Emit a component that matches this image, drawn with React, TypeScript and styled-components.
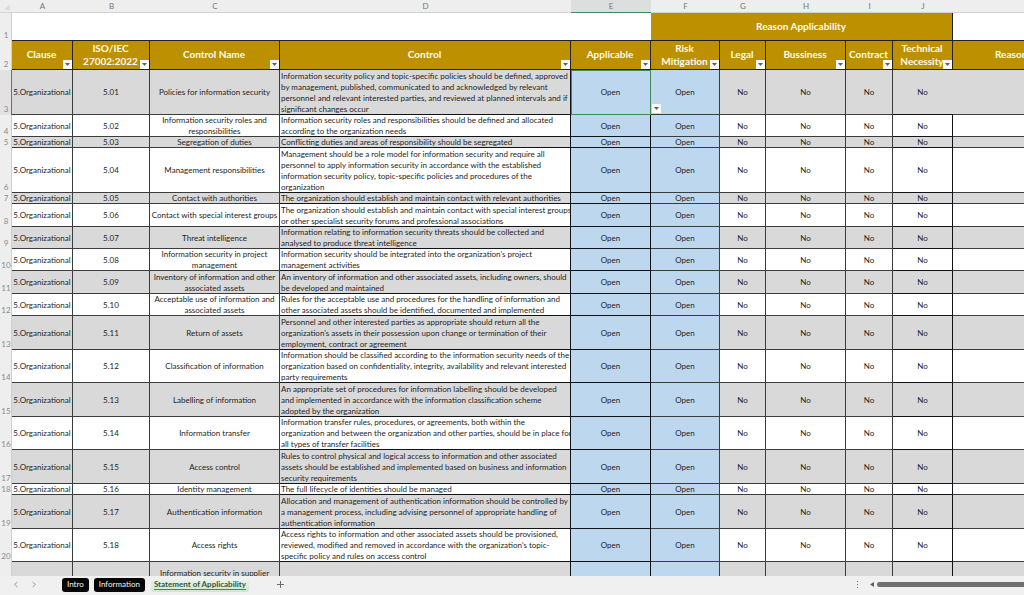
import React from "react";
import styled, { createGlobalStyle, css } from "styled-components";

const GlobalStyle = createGlobalStyle`
  * { box-sizing: border-box; }
  body { margin: 0; background: #f0f0f0; }
  button { font: inherit; border: 0; padding: 0; margin: 0; cursor: pointer; }
`;

const line = "#3c3c3c";
const gold = "#bd9000";
const green = "#3d8a5c";

const Workbook = styled.main`
  display: flex;
  flex-direction: column;
  height: 100vh;
  overflow: hidden;
  font-family: Lato, "Open Sans", sans-serif;
  font-size: 8px;
  line-height: 11px;
  color: #1e1e1e;
`;

const Sheet = styled.div`
  flex: 1;
  min-height: 0;
  overflow: hidden;
`;

const Grid = styled.table`
  table-layout: fixed;
  width: 1193px;
  border-collapse: separate;
  border-spacing: 0;

  th, td { padding: 0; overflow: hidden; }
`;

const Col = styled.col<{ $w: number }>`
  width: ${(p) => p.$w}px;
`;

const Row = styled.tr<{ $h: number; $shade?: boolean }>`
  height: ${(p) => p.$h}px;
  background: ${(p) => (p.$shade ? "#d9d9d9" : "#ffffff")};
`;

const ColumnLetter = styled.th<{ $active?: boolean }>`
  background: ${(p) => (p.$active ? "#dcdfdd" : "#eeeeee")};
  box-shadow: inset 0 -1px 0 ${(p) => (p.$active ? green : "#d2d2d2")};
  color: #767676;
  font-weight: 400;
`;

const Corner = styled(ColumnLetter)`
  svg { display: block; margin-left: 3px; }
`;

const RowNumber = styled.th<{ $active?: boolean }>`
  background: ${(p) => (p.$active ? "#e2e2e2" : "#eeeeee")};
  box-shadow: inset -1px 0 0 ${(p) => (p.$active ? green : "#cfcfcf")};
  color: #8a8a8a;
  font-weight: 400;
  vertical-align: bottom;
`;

const Blank = styled.td`
  box-shadow: inset 0 -1px 0 #222;
`;

const heading = css`
  && { padding: 0 2px 2px 0; }
  background: ${gold};
  color: #fffaf0;
  font-size: 10px;
  font-weight: 700;
  line-height: 13px;
  text-align: center;
`;

const GroupHeading = styled.th`
  ${heading}
  box-shadow: inset -1px -1px 0 #1c1c1c;
`;

const Heading = styled.th<{ $cut?: boolean }>`
  ${heading}
  position: relative;
  box-shadow: inset -1px -1px 0 #2c2408;
  ${(p) =>
    p.$cut &&
    css`
      text-align: left;
      && { padding-left: 42px; }
    `}
`;

const arrowBox = css`
  position: absolute;
  display: grid;
  place-items: center;
  width: 9px;
  height: 9px;
  background: #fbfbfb;
`;

const FilterButton = styled.button`
  ${arrowBox}
  right: 1px;
  bottom: 1px;
`;

const PickButton = styled.button`
  ${arrowBox}
  left: 1px;
  bottom: 2px;
`;

type CellProps = { $align?: "left"; $blue?: boolean; $heavy?: boolean; $open?: boolean; $selected?: boolean };

const Cell = styled.td<CellProps>`
  position: relative;
  && { padding-right: 1px; }
  text-align: ${(p) => p.$align ?? "center"};
  vertical-align: middle;
  white-space: pre;
  ${(p) => p.$blue && "background: #bdd7ee;"}
  box-shadow: inset ${(p) => (p.$open ? "0" : "-1px")} -1px 0 ${(p) => (p.$heavy ? "#101418" : line)};
  ${(p) => p.$align === "left" && "&& { padding: 0 0 0 1px; }"}
  ${(p) => p.$selected && `box-shadow: inset 0 0 0 1px ${green};`}
`;

const TabBar = styled.footer`
  display: flex;
  align-items: center;
  height: 19px;
  padding-bottom: 2px;
  background: #f0f0f0;
`;

const Arrows = styled.div`
  display: flex;
  gap: 12px;
  width: 62px;
  padding-left: 13px;
`;

const IconButton = styled.button`
  display: grid;
  place-items: center;
  background: transparent;
  color: #a0a0a0;
`;

const Tabs = styled.nav`
  display: flex;
  align-items: center;
  gap: 5px;
`;

const Tab = styled.button<{ $active?: boolean }>`
  height: 14px;
  padding: 0 5px;
  border-radius: 3px;
  background: #050505;
  color: #f4f4f4;
  ${(p) =>
    p.$active &&
    css`
      margin-left: 1px;
      padding: 0 3px;
      background: linear-gradient(#eef3ee, #cfe6d0);
      color: #2b5a3c;
      font-weight: 700;
      span { display: block; line-height: 10px; border-bottom: 1px solid ${green}; }
    `}
`;

const AddButton = styled(IconButton)`
  margin-left: 28px;
  color: #6a6a6a;
`;

const Scroll = styled.div`
  display: flex;
  align-items: center;
  gap: 3px;
  width: 168px;
  margin-left: auto;
`;

const Dots = styled(IconButton)`
  width: 4px;
  margin-right: 7px;
  color: #707070;
`;

const Thumb = styled.div`
  flex: 1;
  height: 5px;
  border-radius: 3px 0 0 3px;
  background: #707070;
`;

const Down = () => (
  <svg width="5" height="3" viewBox="0 0 5 3" aria-hidden="true">
    <path d="M0 0h5L2.5 3z" fill="#5c6066" />
  </svg>
);

const widths = [12, 61, 77, 130, 291, 80, 69, 46, 80, 47, 60, 240];
const letters = ["A", "B", "C", "D", "E", "F", "G", "H", "I", "J"];

const headings: string[][] = [
  ["Clause"],
  ["ISO/IEC", "27002:2022"],
  ["Control Name"],
  ["Control"],
  ["Applicable"],
  ["Risk", "Mitigation"],
  ["Legal"],
  ["Bussiness"],
  ["Contract"],
  ["Technical", "Necessity"],
  ["Reason"],
];

type Control = { h: number; id: string; name: string; text: string };

const controls: Control[] = [
  { h: 45, id: "5.01", name: "Policies for information security", text: "Information security policy and topic-specific policies should be defined, approved\nby management, published, communicated to and acknowledged by relevant\npersonnel and relevant interested parties, and reviewed at planned intervals and if\nsignificant changes occur" },
  { h: 22, id: "5.02", name: "Information security roles and\nresponsibilities", text: "Information security roles and responsibilities should be defined and allocated\naccording to the organization needs" },
  { h: 11, id: "5.03", name: "Segregation of duties", text: "Conflicting duties and areas of responsibility should be segregated" },
  { h: 45, id: "5.04", name: "Management responsibilities", text: "Management should be a role model for information security and require all\npersonnel to apply information security in accordance with the established\ninformation security policy, topic-specific policies and procedures of the\norganization" },
  { h: 11, id: "5.05", name: "Contact with authorities", text: "The organization should establish and maintain contact with relevant authorities" },
  { h: 23, id: "5.06", name: "Contact with special interest groups", text: "The organization should establish and maintain contact with special interest groups\nor other specialist security forums and professional associations" },
  { h: 22, id: "5.07", name: "Threat intelligence", text: "Information relating to information security threats should be collected and\nanalysed to produce threat intelligence" },
  { h: 22, id: "5.08", name: "Information security in project\nmanagement", text: "Information security should be integrated into the organization's project\nmanagement activities" },
  { h: 23, id: "5.09", name: "Inventory of information and other\nassociated assets", text: "An inventory of information and other associated assets, including owners, should\nbe developed and maintained" },
  { h: 22, id: "5.10", name: "Acceptable use of information and\nassociated assets", text: "Rules for the acceptable use and procedures for the handling of information and\nother associated assets should be identified, documented and implemented" },
  { h: 34, id: "5.11", name: "Return of assets", text: "Personnel and other interested parties as appropriate should return all the\norganization's assets in their possession upon change or termination of their\nemployment, contract or agreement" },
  { h: 33, id: "5.12", name: "Classification of information", text: "Information should be classified according to the information security needs of the\norganization based on confidentiality, integrity, availability and relevant interested\nparty requirements" },
  { h: 34, id: "5.13", name: "Labelling of information", text: "An appropriate set of procedures for information labelling should be developed\nand implemented in accordance with the information classification scheme\nadopted by the organization" },
  { h: 33, id: "5.14", name: "Information transfer", text: "Information transfer rules, procedures, or agreements, both within the\norganization and between the organization and other parties, should be in place for\nall types of transfer facilities" },
  { h: 34, id: "5.15", name: "Access control", text: "Rules to control physical and logical access to information and other associated\nassets should be established and implemented based on business and information\nsecurity requirements" },
  { h: 11, id: "5.16", name: "Identity management", text: "The full lifecycle of identities should be managed" },
  { h: 34, id: "5.17", name: "Authentication information", text: "Allocation and management of authentication information should be controlled by\na management process, including advising personnel of appropriate handling of\nauthentication information" },
  { h: 33, id: "5.18", name: "Access rights", text: "Access rights to information and other associated assets should be provisioned,\nreviewed, modified and removed in accordance with the organization's topic-\nspecific policy and rules on access control" },
];

function ControlRow({ item, number }: { item: Control; number: number }) {
  const first = number === 3;
  return (
    <Row $h={item.h} $shade={number % 2 === 1}>
      <RowNumber scope="row" $active={first}>{number}</RowNumber>
      <Cell>5.Organizational</Cell>
      <Cell>{item.id}</Cell>
      <Cell>{item.name}</Cell>
      <Cell $align="left" $heavy>{item.text}</Cell>
      <Cell $blue $heavy $selected={first}>Open</Cell>
      <Cell $blue>
        Open
        {first && <PickButton aria-label="Pick from list"><Down /></PickButton>}
      </Cell>
      <Cell>No</Cell>
      <Cell>No</Cell>
      <Cell>No</Cell>
      <Cell $open={first} $heavy>No</Cell>
      <Cell />
    </Row>
  );
}

export default function App() {
  return (
    <Workbook>
      <GlobalStyle />
      <Sheet>
        <Grid>
          <colgroup>
            {widths.map((w, i) => <Col key={i} $w={w} />)}
          </colgroup>
          <thead>
            <Row $h={13}>
              <Corner>
                <svg width="8" height="8" viewBox="0 0 8 8" aria-hidden="true">
                  <path d="M7 1v6H1z" fill="#dcdcdc" />
                </svg>
              </Corner>
              {letters.map((l) => <ColumnLetter key={l} scope="col" $active={l === "E"}>{l}</ColumnLetter>)}
              <ColumnLetter />
            </Row>
            <Row $h={28}>
              <RowNumber scope="row">1</RowNumber>
              <Blank colSpan={5} />
              <GroupHeading colSpan={5}>Reason Applicability</GroupHeading>
              <Blank />
            </Row>
            <Row $h={29}>
              <RowNumber scope="row">2</RowNumber>
              {headings.map((lines, i) => (
                <Heading key={i} scope="col" $cut={i === 10}>
                  {lines.map((t) => <div key={t}>{t}</div>)}
                  {i < 10 && <FilterButton aria-label={`Filter ${lines.join(" ")}`}><Down /></FilterButton>}
                </Heading>
              ))}
            </Row>
          </thead>
          <tbody>
            {controls.map((c, i) => <ControlRow key={c.id} item={c} number={i + 3} />)}
            <Row $h={23} $shade>
              <RowNumber scope="row" />
              <Cell />
              <Cell />
              <Cell>Information security in supplier</Cell>
              <Cell $heavy />
              <Cell $blue $heavy />
              <Cell $blue />
              <Cell />
              <Cell />
              <Cell />
              <Cell $heavy />
              <Cell />
            </Row>
          </tbody>
        </Grid>
      </Sheet>
      <TabBar>
        <Arrows>
          <IconButton aria-label="Previous sheet">
            <svg width="6" height="7" viewBox="0 0 6 7" fill="none" stroke="currentColor"><path d="M4.5 1L1.5 3.5l3 2.5" /></svg>
          </IconButton>
          <IconButton aria-label="Next sheet">
            <svg width="6" height="7" viewBox="0 0 6 7" fill="none" stroke="currentColor"><path d="M1.5 1l3 2.5-3 2.5" /></svg>
          </IconButton>
        </Arrows>
        <Tabs>
          <Tab>Intro</Tab>
          <Tab>Information</Tab>
          <Tab $active><span>Statement of Applicability</span></Tab>
        </Tabs>
        <AddButton aria-label="New sheet">
          <svg width="7" height="7" viewBox="0 0 7 7" stroke="currentColor"><path d="M3.5 0v7M0 3.5h7" /></svg>
        </AddButton>
        <Scroll>
          <Dots aria-label="Resize tab bar">
            <svg width="2" height="7" viewBox="0 0 2 7" fill="currentColor"><path d="M0 0h1v1H0zM0 3h1v1H0zM0 6h1v1H0z" /></svg>
          </Dots>
          <IconButton aria-label="Scroll left">
            <svg width="4" height="5" viewBox="0 0 4 5"><path d="M4 0v5L0 2.5z" fill="#606060" /></svg>
          </IconButton>
          <Thumb />
        </Scroll>
      </TabBar>
    </Workbook>
  );
}
